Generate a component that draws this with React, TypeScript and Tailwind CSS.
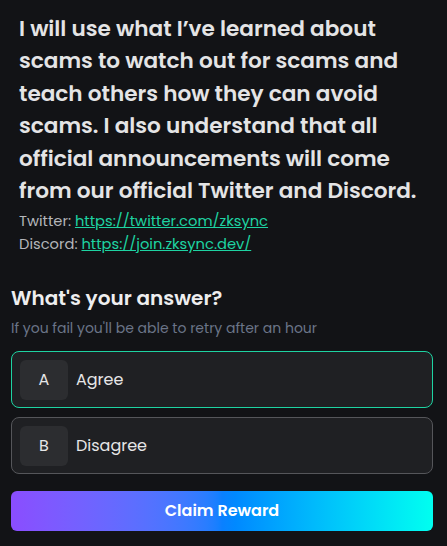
export default function App() {
  return (
    <div
      className="min-h-[546px] w-full bg-[#121316] pl-[11px] pr-[14px] pt-[13px] pb-4"
      style={{ fontFamily: 'Poppins, Inter, "Noto Sans", sans-serif' }}
    >
      <div className="px-2">
        <p className="text-[21.6px] font-semibold leading-[32.4px] text-[#e4e4e5]">
          I will use what I’ve learned about
          <br />
          scams to watch out for scams and
          <br />
          teach others how they can avoid
          <br />
          scams. I also understand that all
          <br />
          official announcements will come
          <br />
          from our official Twitter and Discord.
        </p>
        <p className="mt-[3px] text-[14.7px] leading-[23px] text-[#b4b6ba]">
          Twitter:{' '}
          <a href="#" className="text-[#1ed3a2] underline">
            https://twitter.com/zksync
          </a>
        </p>
        <p className="text-[14.7px] leading-[23px] text-[#b4b6ba]">
          Discord:{' '}
          <a href="#" className="text-[#1ed3a2] underline">
            https://join.zksync.dev/
          </a>
        </p>
      </div>

      <h2 className="mt-[28px] text-[20px] font-semibold leading-[28px] text-[#eeeeef]">
        What's your answer?
      </h2>
      <p className="mt-[6px] text-[14px] leading-[20px] text-[#6b7588]">
        If you fail you'll be able to retry after an hour
      </p>

      <div className="mt-[13px] flex flex-col gap-[9px]">
        <button className="flex h-[57px] items-center gap-2 rounded-lg border border-[#1ed3a2] bg-[#1f2023] px-2 text-left">
          <span className="flex h-10 w-12 items-center justify-center rounded-md bg-[#2c2d30] text-[16px] text-[#e6e6e7]">
            A
          </span>
          <span className="text-[16px] text-[#e6e6e7]">Agree</span>
        </button>
        <button className="flex h-[57px] items-center gap-2 rounded-lg border border-[#55565a] bg-[#1f2023] px-2 text-left">
          <span className="flex h-10 w-12 items-center justify-center rounded-md bg-[#2c2d30] text-[16px] text-[#e6e6e7]">
            B
          </span>
          <span className="text-[16px] text-[#e6e6e7]">Disagree</span>
        </button>
      </div>

      <button className="mt-[17px] flex h-10 w-full items-center justify-center rounded-md bg-gradient-to-r from-[#8a4dff] via-[#0a80ff] to-[#00fff0] text-[16px] font-semibold text-white">
        Claim Reward
      </button>
    </div>
  );
}
